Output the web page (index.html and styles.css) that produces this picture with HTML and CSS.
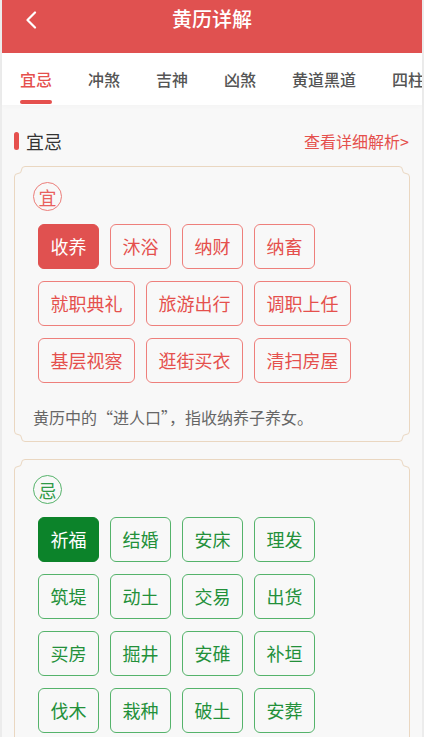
FILE: index.html
```html
<!DOCTYPE html>
<html lang="zh-CN">
<head>
  <meta charset="UTF-8">
  <meta name="viewport" content="width=device-width, initial-scale=1.0">
  <title>黄历详解</title>
  <link rel="stylesheet" href="styles.css">
</head>
<body>
  <div class="page">
    <header class="topbar">
      <a href="#" class="back">
        <svg width="12" height="18" viewBox="0 0 12 18"><path d="M10 1.5 L2.5 9 L10 16.5" fill="none" stroke="#fff" stroke-width="2.2" stroke-linecap="round" stroke-linejoin="round"/></svg>
      </a>
      <h1>黄历详解</h1>
    </header>

    <nav class="tabs">
      <a href="#" class="tab active">宜忌</a>
      <a href="#" class="tab">冲煞</a>
      <a href="#" class="tab">吉神</a>
      <a href="#" class="tab">凶煞</a>
      <a href="#" class="tab">黄道黑道</a>
      <a href="#" class="tab">四柱</a>
    </nav>

    <main class="content">
      <div class="sec-head">
        <h2>宜忌</h2>
        <a href="#" class="more">查看详细解析&gt;</a>
      </div>

      <section class="card">
        <span class="corner tl"><svg width="14" height="14" viewBox="0 0 14 14"><path d="M0.5 14 V11 A3.5 3.5 0 0 1 4 7.5 A3.5 3.5 0 0 0 7.5 4 A3.5 3.5 0 0 1 11 0.5 H14"/></svg></span>
        <span class="corner tr"><svg width="14" height="14" viewBox="0 0 14 14"><path d="M0.5 14 V11 A3.5 3.5 0 0 1 4 7.5 A3.5 3.5 0 0 0 7.5 4 A3.5 3.5 0 0 1 11 0.5 H14"/></svg></span>
        <span class="corner bl"><svg width="14" height="14" viewBox="0 0 14 14"><path d="M0.5 14 V11 A3.5 3.5 0 0 1 4 7.5 A3.5 3.5 0 0 0 7.5 4 A3.5 3.5 0 0 1 11 0.5 H14"/></svg></span>
        <span class="corner br"><svg width="14" height="14" viewBox="0 0 14 14"><path d="M0.5 14 V11 A3.5 3.5 0 0 1 4 7.5 A3.5 3.5 0 0 0 7.5 4 A3.5 3.5 0 0 1 11 0.5 H14"/></svg></span>

        <div class="seal seal-red">宜</div>
        <div class="tags">
          <span class="tag red on">收养</span>
          <span class="tag red">沐浴</span>
          <span class="tag red">纳财</span>
          <span class="tag red">纳畜</span>
          <span class="tag red">就职典礼</span>
          <span class="tag red">旅游出行</span>
          <span class="tag red">调职上任</span>
          <span class="tag red">基层视察</span>
          <span class="tag red">逛街买衣</span>
          <span class="tag red">清扫房屋</span>
        </div>
        <p class="desc">黄历中的“进人口”，指收纳养子养女。</p>
      </section>

      <section class="card">
        <span class="corner tl"><svg width="14" height="14" viewBox="0 0 14 14"><path d="M0.5 14 V11 A3.5 3.5 0 0 1 4 7.5 A3.5 3.5 0 0 0 7.5 4 A3.5 3.5 0 0 1 11 0.5 H14"/></svg></span>
        <span class="corner tr"><svg width="14" height="14" viewBox="0 0 14 14"><path d="M0.5 14 V11 A3.5 3.5 0 0 1 4 7.5 A3.5 3.5 0 0 0 7.5 4 A3.5 3.5 0 0 1 11 0.5 H14"/></svg></span>

        <div class="seal seal-green">忌</div>
        <div class="tags">
          <span class="tag green on">祈福</span>
          <span class="tag green">结婚</span>
          <span class="tag green">安床</span>
          <span class="tag green">理发</span>
          <span class="tag green">筑堤</span>
          <span class="tag green">动土</span>
          <span class="tag green">交易</span>
          <span class="tag green">出货</span>
          <span class="tag green">买房</span>
          <span class="tag green">掘井</span>
          <span class="tag green">安碓</span>
          <span class="tag green">补垣</span>
          <span class="tag green">伐木</span>
          <span class="tag green">栽种</span>
          <span class="tag green">破土</span>
          <span class="tag green">安葬</span>
        </div>
      </section>
    </main>
  </div>
</body>
</html>
```

FILE: styles.css
```css
/* base */
* {
  margin: 0;
  padding: 0;
  box-sizing: border-box;
}

html, body {
  height: 100%;
  background-color: #ececec;
  font-family: "Noto Sans CJK SC", "Noto Sans", sans-serif;
  overflow: hidden;
}

a {
  text-decoration: none;
}

.page {
  margin: 0 2px;
  min-height: 100%;
  background-color: #f8f8f8;
}

/* top bar */
.topbar {
  position: relative;
  height: 53px;
  background-color: #e05150;
  display: flex;
  justify-content: center;
  align-items: center;
  padding-bottom: 16px;
}

.topbar h1 {
  font-size: 20px;
  font-weight: 500;
  color: #fff;
  line-height: 24px;
}

.back {
  position: absolute;
  left: 23px;
  top: 10px;
  display: block;
  width: 12px;
  height: 18px;
}

/* tabs */
.tabs {
  height: 52px;
  background-color: #fff;
  display: flex;
  gap: 36px;
  padding-left: 18px;
  white-space: nowrap;
  overflow: hidden;
  box-shadow: 0 2px 4px rgba(0, 0, 0, 0.02);
}

.tab {
  position: relative;
  flex-shrink: 0;
  font-size: 16px;
  font-weight: 500;
  line-height: 52px;
  color: #555;
}

.tab.active {
  color: #e5504d;
}

.tab.active::after {
  content: "";
  position: absolute;
  left: 0;
  right: 0;
  bottom: 1px;
  height: 4px;
  border-radius: 2px;
  background-color: #e5504d;
}

/* content */
.content {
  padding: 0 12px;
}

.sec-head {
  display: flex;
  justify-content: space-between;
  align-items: center;
  height: 22px;
  margin: 25px 0 14px;
}

.sec-head h2 {
  display: flex;
  align-items: center;
  gap: 7px;
  font-size: 18px;
  font-weight: 400;
  color: #333;
}

.sec-head h2::before {
  content: "";
  width: 5px;
  height: 18px;
  border-radius: 3px;
  background-color: #e5504d;
}

.more {
  font-size: 16px;
  color: #e5504d;
  margin-right: 1px;
}

/* card with carved corners */
.card {
  position: relative;
  border: 1px solid #ead7c1;
  padding: 15px 18px 12px;
  margin-bottom: 17px;
}

.corner {
  position: absolute;
  width: 14px;
  height: 14px;
  background-color: #f8f8f8;
}

.corner svg {
  display: block;
}

.corner path {
  fill: none;
  stroke: #ead7c1;
  stroke-width: 1;
}

.corner.tl { top: -1px; left: -1px; }
.corner.tr { top: -1px; right: -1px; transform: scaleX(-1); }
.corner.bl { bottom: -1px; left: -1px; transform: scaleY(-1); }
.corner.br { bottom: -1px; right: -1px; transform: scale(-1, -1); }

.seal {
  width: 29px;
  height: 29px;
  border-radius: 50%;
  border: 1.5px solid;
  display: flex;
  justify-content: center;
  align-items: center;
  font-size: 18px;
  font-weight: 400;
  line-height: 1;
}

.seal-red {
  color: #e8605c;
  border-color: #ec7e7a;
}

.seal-green {
  color: #2e9a46;
  border-color: #56b36b;
}

/* four short tags or three long ones per row */
.tags {
  display: flex;
  flex-wrap: wrap;
  gap: 12px 11px;
  width: 335px;
  margin-top: 13px;
  padding-left: 5px;
}

.tag {
  height: 45px;
  line-height: 43px;
  padding: 0 11.5px;
  border: 1px solid;
  border-radius: 6px;
  font-size: 18px;
}

.tag.red {
  color: #e5504d;
  border-color: #ee7f7b;
}

.tag.red.on {
  color: #fff;
  background-color: #e05150;
  border-color: #e05150;
}

.tag.green {
  color: #23903a;
  border-color: #55b36b;
}

.tag.green.on {
  color: #fff;
  background-color: #0c832a;
  border-color: #0c832a;
}

.desc {
  margin-top: 22px;
  font-size: 16px;
  line-height: 24px;
  color: #666;
}
```
